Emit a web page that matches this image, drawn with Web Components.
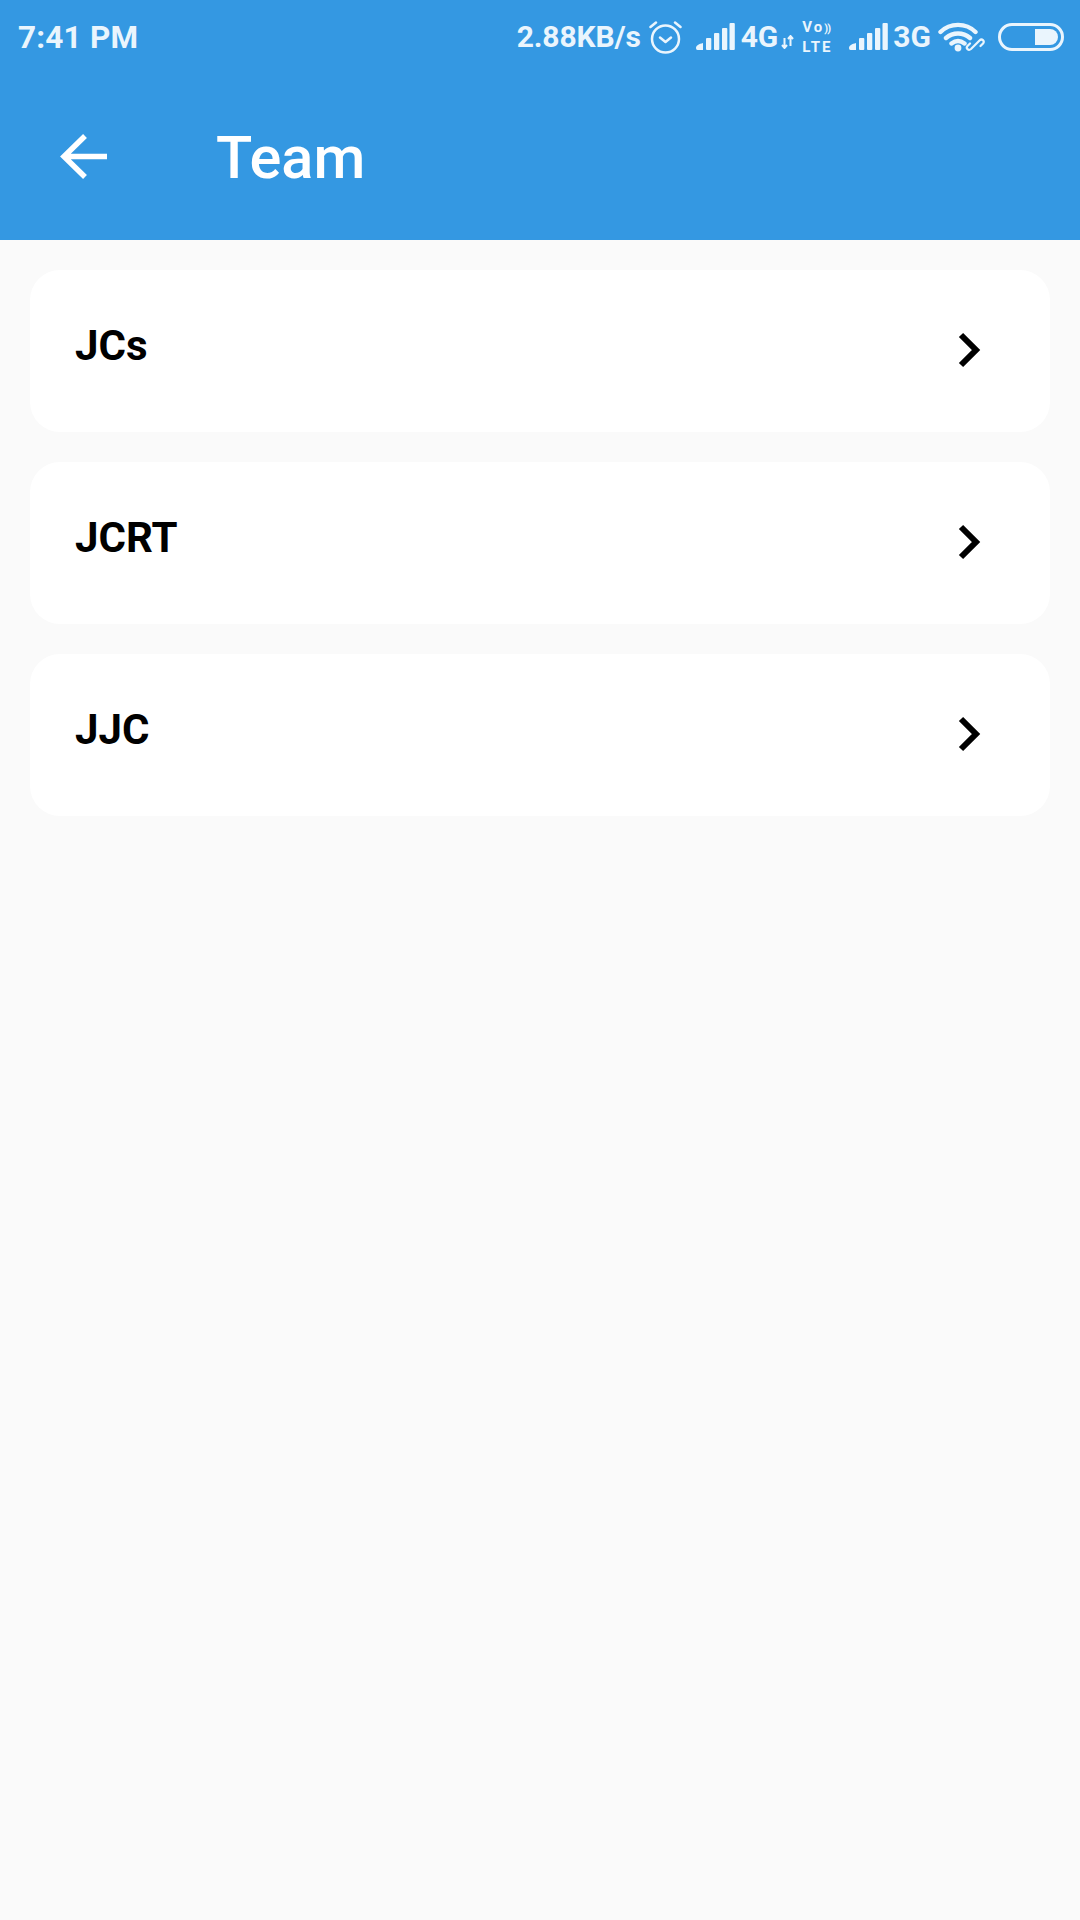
<!DOCTYPE html>
<html><head><meta charset="utf-8">
<style>
html,body{margin:0;padding:0;background:#fafafa;}
body{width:1080px;height:1920px;overflow:hidden;font-family:Roboto,"Liberation Sans",sans-serif;}
</style></head>
<body>
<team-screen>
  <app-header title="Team"></app-header>
  <team-list>
    <team-row>JCs</team-row>
    <team-row>JCRT</team-row>
    <team-row>JJC</team-row>
  </team-list>
</team-screen>
<script>
function def(name, css, html){
  customElements.define(name, class extends HTMLElement{
    constructor(){super();const r=this.attachShadow({mode:'open'});r.innerHTML='<style>'+css+'</style>'+html;}
  });
}
const bars=`<svg width="39" height="28" viewBox="0 0 39 28" fill="#eaf5fd"><path d="M0 25c0-2.500 3-4 7-5v7H1.500C.5 27 0 26 0 25z"/><rect x="10" y="15" width="5.300" height="12" rx="1"/><rect x="18" y="10" width="5.300" height="17" rx="1"/><rect x="26" y="5" width="5.300" height="22" rx="1"/><rect x="33.500" y="0" width="5.300" height="27" rx="1"/></svg>`;
def('status-bar',`
:host{display:flex;align-items:center;height:72px;padding:0 16px 0 18px;color:#eaf5fd;font-family:Roboto,sans-serif;font-weight:700}
.time{font-size:31.500px;line-height:40px;padding-top:3px;font-weight:700;letter-spacing:.2px}
.right{margin-left:auto;display:flex;align-items:center;height:72px}
.t{font-size:30px;line-height:40px;padding-top:2px;font-weight:700}
.lte{display:flex;flex-direction:column;align-items:flex-start;width:32px;font-size:15px;line-height:18px;font-weight:700;letter-spacing:2px}
svg{display:block;flex:none}
`,`<span class="time">7:41 PM</span>
<div class="right">
<span class="t" style="margin-right:8px;letter-spacing:-.15px">2.88KB/s</span>
<svg style="margin:2px 14px 0 0" width="33" height="33" viewBox="0 0 33 33" fill="none" stroke="#eaf5fd" stroke-width="2.500" stroke-linecap="round" stroke-linejoin="round"><circle cx="16.500" cy="18" r="13.500"/><path d="M11 16.500l5.500 4.500 5.500-4.500"/><path d="M1.500 6L7 1.500M31.500 6L26 1.500"/></svg>
<span style="margin:2px 6px 0 0;display:block">${bars}</span>
<span class="t" style="margin-right:3px">4G</span>
<svg style="margin:11px 8px 0 0" width="13" height="14" viewBox="0 0 13 14" fill="none" stroke="#eaf5fd" stroke-width="2"><path d="M3.500 13V3M1 10l2.500 3L6 10M9.500 1v10M7 4l2.500-3L12 4"/></svg>
<span class="lte" style="margin:1px 15px 0 0"><span>Vo<span style="font-size:11px;letter-spacing:-1px">))</span></span><span>LTE</span></span>
<span style="margin:2px 5px 0 0;display:block">${bars}</span>
<span class="t" style="margin-right:7px">3G</span>
<svg style="margin:2px 13px 0 0" width="47" height="30" viewBox="0 0 47 30" fill="none" stroke="#eaf5fd" stroke-linecap="round"><path stroke-width="4.400" d="M2.500 10C12 .5 28 .5 37.500 10M8 16c7-6 17-6 24 0M13.500 21.500c4-3 9-3 13 0"/><circle cx="20" cy="26" r="3.400" fill="#eaf5fd" stroke="none"/><path stroke="#3498e2" stroke-width="7" d="M33 26l9-9"/><path stroke-width="2.200" d="M36 24l5.500-5.500c2.500-2.500 5.500.5 3.500 3l-2.500 2.500M38.500 21.500l-5.500 5.500c-2.500 2-5.500-.5-3.500-3l2.500-2.500"/></svg>
<svg style="margin-top:1px" width="66" height="28" viewBox="0 0 66 28"><rect x="1.500" y="1.500" width="63" height="25" rx="12.500" fill="none" stroke="#eaf5fd" stroke-width="3"/><path d="M37 6h15a8 8 0 0 1 0 16H37z" fill="#eaf5fd"/></svg>
</div>`);
def('app-header',`
:host{display:block;height:240px;background:#3498e2;color:#fff}
.bar{display:flex;align-items:center;height:168px;padding-left:58px}
svg{display:block;flex:none;position:relative;top:2px}
h1{margin:0 0 0 105px;font:500 59.500px/1 Roboto,sans-serif;position:relative;top:3px}
`,`<status-bar></status-bar><div class="bar">
<svg width="53" height="50" viewBox="0 0 53 50" fill="none" stroke="#fff" stroke-width="5.500"><path d="M49 23.500H8M27 3L6 23.500 27 44"/></svg>
<h1>Team</h1></div>`);
def('team-screen',`:host{display:block}`,`<slot></slot>`);
def('team-list',`:host{display:flex;flex-direction:column;gap:30px;padding:30px}`,`<slot></slot>`);
def('team-row',`
:host{display:flex;align-items:center;justify-content:space-between;box-sizing:border-box;height:162px;background:#fff;border-radius:30px;padding:0 67px 0 45px;color:#000;font:700 42px/1 Roboto,sans-serif}
.l{position:relative;top:-5px}
svg{display:block;position:relative;top:-1px}
`,`<span class="l"><slot></slot></span><svg width="26" height="36" viewBox="0 0 26 36" fill="none" stroke="#000" stroke-width="6"><path d="M4 3l15 15L4 33"/></svg>`);
</script>
</body></html>
